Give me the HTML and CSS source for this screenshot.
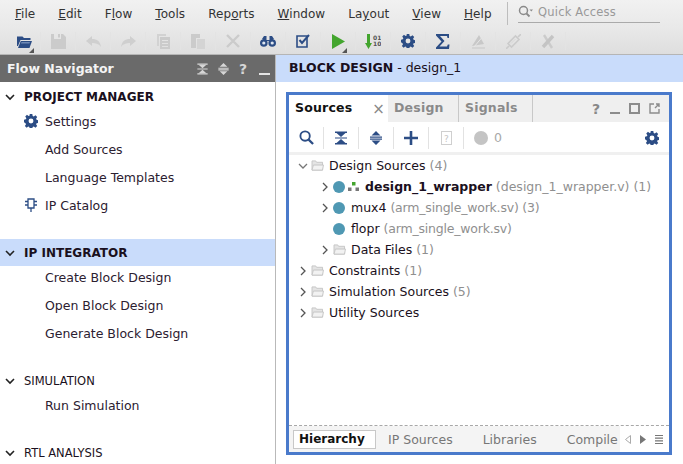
FILE: index.html
```html
<!DOCTYPE html>
<html lang="en">
<head>
    <meta charset="UTF-8">
    <meta name="viewport" content="width=device-width, initial-scale=1.0">
    <title>Vivado Block Design</title>
    <link rel="stylesheet" href="styles.css">
</head>
<body>
    <svg class="defs" width="0" height="0">
        <symbol id="gear" viewBox="0 0 16 16">
            <path fill-rule="evenodd" d="M6.5 0h3l.4 2.2 1.3.6 1.900-1.300 2 2-1.300 1.900.6 1.300 2.100.4v3l-2.100.4-.6 1.300 1.300 1.800-2 2-1.900-1.300-1.300.6-.4 2.100h-3l-.4-2.100-1.300-.6-1.800 1.300-2-2 1.300-1.800-.6-1.300L0 9.500v-3l2.100-.4.6-1.300-1.300-1.900 2-2 1.800 1.300 1.300-.6zM8 5.200a2.800 2.800 0 1 0 0 5.600 2.800 2.800 0 0 0 0-5.600z"/>
        </symbol>
        <symbol id="folder" viewBox="0 0 14 12">
            <path d="M1 1h4l1 1.500h6.500V11H1z" fill="#e4e4e4" stroke="#c4c4c4"/>
            <path d="M1 11l1.500-5.500H13.500L12.500 11z" fill="#f2f2f2" stroke="#c4c4c4"/>
        </symbol>
        <symbol id="collapse" viewBox="0 0 12 14">
            <path d="M0 .5h12v1.600H0zM0 11.900h12v1.600H0zM0 6.400h12v1.200H0z"/>
            <path d="M1.500 2.100h9L6 6zM1.500 11.900L6 8l4.500 3.900z"/>
        </symbol>
        <symbol id="expand" viewBox="0 0 12 14">
            <path d="M6 0l4.500 4.500h-9zM6 14L1.500 9.500h9zM0 5.400h12v1.300H0zM0 7.400h12v1.300H0z"/>
        </symbol>
    </svg>

    <header class="menubar">
        <nav class="menu">
            <span><u>F</u>ile</span>
            <span><u>E</u>dit</span>
            <span>F<u>l</u>ow</span>
            <span><u>T</u>ools</span>
            <span>Rep<u>o</u>rts</span>
            <span><u>W</u>indow</span>
            <span>La<u>y</u>out</span>
            <span><u>V</u>iew</span>
            <span><u>H</u>elp</span>
        </nav>
        <div class="quick-access">
            <svg width="15" height="13" viewBox="0 0 15 13"><circle cx="5.500" cy="5.500" r="4" fill="none" stroke="#8a8a8a" stroke-width="1.500"/><path d="M8.500 8.500l3 3" stroke="#8a8a8a" stroke-width="1.800"/><path d="M11.500 4.500h3.500l-1.700 2z" fill="#8a8a8a"/></svg>
            <span>Quick Access</span>
        </div>
    </header>

    <div class="toolbar">
        <div class="tool has-menu tool-open"><svg width="15" height="13" viewBox="0 0 15 13"><path d="M0 1.500h5.500l1.500 1.500h6.500v2H3.500L1 11H0z" fill="#2c4d85"/><path d="M1 13l2.800-7H15l-2.500 7z" fill="#2c4d85"/><path d="M4.500 7h8.500l-.6 1.500H3.900z" fill="#6f8ab5"/></svg></div>
        <div class="tool"><svg width="15" height="15" viewBox="0 0 15 15"><path fill-rule="evenodd" d="M0 0h3v5h7V0h2l3 3v12H0zM7 0h2v3.500H7z" fill="#cbcbcb"/></svg></div>
        <div class="tool"><svg width="15" height="11" viewBox="0 0 15 11"><path d="M6 0v3c5 0 8 2 9 8-2-3-5-4-9-4v3L0 5z" fill="#cfcfcf"/></svg></div>
        <div class="tool"><svg width="15" height="11" viewBox="0 0 15 11"><path d="M9 0v3C4 3 1 5 0 11c2-3 5-4 9-4v3l6-5z" fill="#cfcfcf"/></svg></div>
        <div class="tool"><svg width="13" height="15" viewBox="0 0 13 15"><path d="M0 0h9v2H2v10H0z" fill="#d2d2d2"/><path fill-rule="evenodd" d="M3 3h10v12H3zM5 6v1h6V6zM5 9v1h6V9zM5 12v1h6v-1z" fill="#cbcbcb"/></svg></div>
        <div class="tool"><svg width="14" height="15" viewBox="0 0 14 15"><path d="M0 0h9v4H5v10H0z" fill="#cbcbcb"/><path d="M6 5h8v10H6z" fill="#d4d4d4"/></svg></div>
        <div class="tool"><svg width="14" height="14" viewBox="0 0 14 14"><path d="M1 1l12 12M13 1L1 13" stroke="#cbcbcb" stroke-width="2.400"/></svg></div>
        <div class="tool"><svg width="16" height="11" viewBox="0 0 16 11"><circle cx="3.800" cy="7" r="3.800" fill="#2c4d85"/><circle cx="12.200" cy="7" r="3.800" fill="#2c4d85"/><path d="M2 3l2-3h2.500v4h3V0H12l2 3-3 2H5z" fill="#2c4d85"/><circle cx="3.800" cy="7" r="1.600" fill="#dfe6f0"/><circle cx="12.200" cy="7" r="1.600" fill="#dfe6f0"/></svg></div>
        <div class="tool"><svg width="15" height="14" viewBox="0 0 15 14"><path d="M1 2h10v11H1z" fill="none" stroke="#2c4d85" stroke-width="1.600"/><path d="M3.500 6l2.500 3 7-8" fill="none" stroke="#2c4d85" stroke-width="2"/></svg></div>
        <div class="tool has-menu tool-run"><svg width="13" height="15" viewBox="0 0 13 15"><path d="M0 0l13 7.500L0 15z" fill="#43a52e"/></svg></div>
        <div class="tool"><svg width="16" height="15" viewBox="0 0 16 15"><path d="M2 0h3v9h2l-3.500 6L0 9h2z" fill="#43a52e"/><text x="8" y="6" class="bits">01</text><text x="8" y="12" class="bits">10</text></svg></div>
        <div class="tool"><svg class="ico-blue" width="14" height="14"><use href="#gear"/></svg></div>
        <div class="tool"><svg width="14" height="15" viewBox="0 0 14 15"><path d="M0 0h13v4h-1.500L11 2H4l4.500 5L3.500 12.500H11l.8-2H13.500L13 15H0v-1.500L5.500 7.500 0 1.500z" fill="#2c4d85"/></svg></div>
        <div class="tool"><svg width="15" height="15" viewBox="0 0 15 15"><path d="M1 12L8 1l5 9z" fill="#c8c8c8"/><path d="M13 1L3 13" stroke="#e6e6e6" stroke-width="1"/><path d="M1 14h13" stroke="#d4d4d4" stroke-width="2"/></svg></div>
        <div class="tool"><svg width="15" height="15" viewBox="0 0 15 15"><path d="M2 9.500L9.500 2 13 5.500 5.500 13z" fill="none" stroke="#cbcbcb" stroke-width="1.600"/><path d="M0 15l3-3M12 3l3-3" stroke="#cbcbcb" stroke-width="1.600"/><path d="M5 9.500l4.500-4.500" stroke="#d8d8d8"/></svg></div>
        <div class="tool"><svg width="14" height="15" viewBox="0 0 14 15"><path d="M3 1l8 13" stroke="#cbcbcb" stroke-width="2.400"/><path d="M12 2L2 13" stroke="#c4c4c4" stroke-width="3.400"/></svg></div>
    </div>

    <main class="workspace">
        <aside class="flow-nav">
            <div class="nav-head">
                <span class="nav-title">Flow Navigator</span>
                <div class="nav-head-icons">
                    <svg width="11" height="12"><use href="#collapse"/></svg>
                    <svg width="11" height="12"><use href="#expand"/></svg>
                    <span class="head-help">?</span>
                    <span class="head-min"></span>
                </div>
            </div>

            <div class="nav-section first">
                <svg class="chev" width="10" height="10" viewBox="0 0 10 10"><path d="M1 3l4 4 4-4" fill="none" stroke="#222" stroke-width="1.600"/></svg>
                <b>PROJECT MANAGER</b>
            </div>
            <div class="nav-item nav-item-first"><svg class="item-icon ico-blue" width="14" height="14"><use href="#gear"/></svg>Settings</div>
            <div class="nav-item">Add Sources</div>
            <div class="nav-item">Language Templates</div>
            <div class="nav-item"><svg class="item-icon" width="14" height="14" viewBox="0 0 14 14"><path d="M4 1h6v9H4z" fill="none" stroke="#2c4d85" stroke-width="1.300"/><path d="M1 3.500h3M1 7h3M10 3.500h3M10 7h3M7 10v4" stroke="#2c4d85" stroke-width="1.300" fill="none"/></svg>IP Catalog</div>

            <div class="nav-section active">
                <svg class="chev" width="10" height="10" viewBox="0 0 10 10"><path d="M1 3l4 4 4-4" fill="none" stroke="#222" stroke-width="1.600"/></svg>
                <b>IP INTEGRATOR</b>
            </div>
            <div class="nav-item nav-item-first">Create Block Design</div>
            <div class="nav-item">Open Block Design</div>
            <div class="nav-item">Generate Block Design</div>

            <div class="nav-section plain">
                <svg class="chev" width="10" height="10" viewBox="0 0 10 10"><path d="M1 3l4 4 4-4" fill="none" stroke="#222" stroke-width="1.600"/></svg>
                SIMULATION
            </div>
            <div class="nav-item nav-item-first">Run Simulation</div>

            <div class="nav-section plain">
                <svg class="chev" width="10" height="10" viewBox="0 0 10 10"><path d="M1 3l4 4 4-4" fill="none" stroke="#222" stroke-width="1.600"/></svg>
                RTL ANALYSIS
            </div>
        </aside>

        <section class="design-area">
            <div class="design-head"><b>BLOCK DESIGN</b> - design_1</div>

            <div class="sources-panel">
                <div class="tabs">
                    <div class="tab current">Sources<span class="tab-close">×</span></div>
                    <div class="tab tab-design">Design</div>
                    <div class="tab tab-signals">Signals</div>
                    <div class="win-icons">
                        <span class="win-help">?</span>
                        <span class="win-min"></span>
                        <span class="win-max"></span>
                        <svg width="11" height="11" viewBox="0 0 11 11"><path d="M5 1H1v9h9V6M7 1h3v3M10 1L6 5" fill="none" stroke="#8c8c8c" stroke-width="1.400"/></svg>
                    </div>
                </div>

                <div class="panel-tools">
                    <div class="ptool"><svg width="15" height="15" viewBox="0 0 16 16"><circle cx="6.500" cy="6.500" r="5" fill="none" stroke="#2c4d85" stroke-width="2"/><path d="M10 10l5 5" stroke="#2c4d85" stroke-width="2.400"/></svg></div>
                    <div class="ptool"><svg class="ico-blue" width="12" height="14"><use href="#collapse"/></svg></div>
                    <div class="ptool"><svg class="ico-blue" width="12" height="14"><use href="#expand"/></svg></div>
                    <div class="ptool"><svg width="14" height="14" viewBox="0 0 14 14"><path d="M5.700 0h2.600v5.700H14v2.600H8.300V14H5.700V8.300H0V5.700h5.700z" fill="#2c4d85"/></svg></div>
                    <div class="ptool"><svg width="11" height="14" viewBox="0 0 11 14"><rect x=".5" y=".5" width="10" height="13" fill="none" stroke="#cfcfcf"/><text x="5.500" y="10.500" class="doc-mark">?</text></svg></div>
                    <div class="ptool count"><span class="grey-dot"></span><span class="count-num">0</span></div>
                    <svg class="ptool-gear ico-blue" width="14" height="14"><use href="#gear"/></svg>
                </div>

                <div class="tree">
                    <div class="row lvl0"><svg class="twist" width="10" height="10" viewBox="0 0 10 10"><path d="M1 3l4 4 4-4" fill="none" stroke="#777" stroke-width="1.300"/></svg><svg class="fold" width="13" height="11"><use href="#folder"/></svg>Design Sources <span class="dim">(4)</span></div>
                    <div class="row lvl1"><svg class="twist" width="10" height="10" viewBox="0 0 10 10"><path d="M3 1l4 4-4 4" fill="none" stroke="#555" stroke-width="1.300"/></svg><span class="dot"></span><svg class="bd-icon" width="11" height="9" viewBox="0 0 11 9"><path d="M4 0h3.500v3.500H4z" fill="#43a52e"/><path d="M0 5.500h3.500V9H0zM7.500 5.500H11V9H7.500z" fill="#777"/></svg><b>design_1_wrapper</b><span class="dim"> (design_1_wrapper.v) (1)</span></div>
                    <div class="row lvl1"><svg class="twist" width="10" height="10" viewBox="0 0 10 10"><path d="M3 1l4 4-4 4" fill="none" stroke="#555" stroke-width="1.300"/></svg><span class="dot"></span>mux4 <span class="dim tight">(arm_single_work.sv) (3)</span></div>
                    <div class="row lvl1 no-twist"><span class="dot"></span>flopr <span class="dim tight">(arm_single_work.sv)</span></div>
                    <div class="row lvl1"><svg class="twist" width="10" height="10" viewBox="0 0 10 10"><path d="M3 1l4 4-4 4" fill="none" stroke="#555" stroke-width="1.300"/></svg><svg class="fold" width="13" height="11"><use href="#folder"/></svg>Data Files <span class="dim">(1)</span></div>
                    <div class="row lvl0"><svg class="twist" width="10" height="10" viewBox="0 0 10 10"><path d="M3 1l4 4-4 4" fill="none" stroke="#555" stroke-width="1.300"/></svg><svg class="fold" width="13" height="11"><use href="#folder"/></svg>Constraints <span class="dim">(1)</span></div>
                    <div class="row lvl0"><svg class="twist" width="10" height="10" viewBox="0 0 10 10"><path d="M3 1l4 4-4 4" fill="none" stroke="#555" stroke-width="1.300"/></svg><svg class="fold" width="13" height="11"><use href="#folder"/></svg>Simulation Sources <span class="dim">(5)</span></div>
                    <div class="row lvl0"><svg class="twist" width="10" height="10" viewBox="0 0 10 10"><path d="M3 1l4 4-4 4" fill="none" stroke="#555" stroke-width="1.300"/></svg><svg class="fold" width="13" height="11"><use href="#folder"/></svg>Utility Sources</div>
                </div>

                <div class="bottom-tabs">
                    <div class="btab-strip">
                        <div class="btab selected">Hierarchy</div>
                        <div class="btab">IP Sources</div>
                        <div class="btab">Libraries</div>
                        <div class="btab">Compile</div>
                    </div>
                    <div class="btab-nav">
                        <svg width="6" height="9" viewBox="0 0 6 9"><path d="M5.500.5v8L.5 4.500z" fill="none" stroke="#aaa"/></svg>
                        <svg width="6" height="9" viewBox="0 0 6 9"><path d="M0 0v9l6-4.500z" fill="#777"/></svg>
                        <svg width="8" height="9" viewBox="0 0 8 9"><path d="M0 .5h8M0 3.200h8M0 5.800h8M0 8.500h8" stroke="#777" stroke-width="1.200"/></svg>
                    </div>
                </div>
            </div>
        </section>
    </main>
</body>
</html>
```

FILE: styles.css
```css
html, body {
    margin: 0;
    padding: 0;
}
body {
    width: 683px;
    height: 464px;
    overflow: hidden;
    display: flex;
    flex-direction: column;
    font-family: 'DejaVu Sans', sans-serif;
    font-size: 12.5px;
    color: #1a1020;
    background: #fff;
}
.defs {
    position: absolute;
}
.ico-blue {
    fill: #2c4d85;
}

/* menu + toolbar */
.menubar {
    height: 27px;
    display: flex;
    background: linear-gradient(#f1f1f1, #e9e9e9);
}
.menu {
    display: flex;
    gap: 23px;
    width: 508px;
    box-sizing: border-box;
    border-right: 1px solid #bdbdbd;
    margin: 2px 0;
    padding: 5px 0 0 15px;
    color: #333;
    font-size: 12px;
    letter-spacing: .05px;
    white-space: nowrap;
}
.menu span {
    line-height: 14px;
}
.quick-access {
    margin: 0 0 0 10px;
    width: 142px;
    height: 23px;
    padding-top: 5px;
    box-sizing: border-box;
    border-bottom: 1px solid #aaa;
    display: flex;
    gap: 5px;
    color: #999;
    font-size: 11.5px;
    letter-spacing: .2px;
}
.toolbar {
    height: 28px;
    flex: none;
    display: flex;
    padding: 5px 0 0 6px;
    box-sizing: border-box;
    background: linear-gradient(#e9e9e9, #dedede);
    border-bottom: 1px solid #b5b5b5;
}
.tool {
    width: 35px;
    height: 18px;
    display: flex;
    align-items: center;
    justify-content: center;
    border-right: 1px solid #e3e3e3;
    box-sizing: border-box;
    position: relative;
}
.tool-open svg {
    margin-left: 3px;
}
.has-menu::after {
    content: "";
    position: absolute;
    right: 6px;
    bottom: -3px;
    border-left: 5px solid transparent;
    border-bottom: 5px solid #555;
}
.tool-run::after {
    right: 8px;
}
.bits {
    font-size: 6px;
    fill: #555;
    font-weight: bold;
}

.workspace {
    flex: 1;
    min-height: 0;
    display: flex;
}

/* left column */
.flow-nav {
    width: 276px;
    flex: none;
    box-sizing: border-box;
    border-right: 1px solid #b9b9b9;
    overflow: hidden;
}
.nav-head {
    height: 27px;
    background: #6a6a6a;
    display: flex;
    align-items: center;
    justify-content: space-between;
    padding: 0 5px 0 7px;
}
.nav-title {
    color: #f4f4f4;
    font-weight: bold;
    font-size: 12.5px;
}
.nav-head-icons {
    display: flex;
    align-items: center;
    gap: 10px;
    fill: #d6d6d6;
}
.head-help {
    color: #d6d6d6;
    font-weight: bold;
    font-size: 14px;
    width: 10px;
}
.head-min {
    width: 11px;
    height: 2px;
    margin: 10px 0 0 0;
    background: #e4e4e4;
}
.nav-section {
    height: 27px;
    display: flex;
    align-items: center;
    gap: 9px;
    padding-left: 5px;
    margin-top: 20px;
    font-size: 12px;
}
.nav-section.first {
    margin-top: 1px;
}
.nav-section.active {
    background: #c9dcfb;
}
.nav-section.plain {
    font-size: 11.5px;
}
.nav-item {
    height: 28px;
    display: flex;
    align-items: center;
    padding-left: 45px;
    position: relative;
    color: #2b2030;
}
.nav-item-first {
    margin-top: -3px;
}
.item-icon {
    position: absolute;
    left: 24px;
    top: 7px;
}

/* right column */
.design-area {
    flex: 1;
    min-width: 0;
    display: flex;
    flex-direction: column;
}
.design-head {
    height: 27px;
    line-height: 26px;
    padding-left: 13px;
    background: #c9dcfb;
}
.sources-panel {
    width: 386px;
    height: 363px;
    margin: 10px 0 0 10px;
    box-sizing: border-box;
    border: 3px solid #4a7acb;
    display: flex;
    flex-direction: column;
}
.tabs {
    height: 27px;
    flex: none;
    display: flex;
    background: #efefef;
    font-weight: bold;
    color: #8a8a8a;
    letter-spacing: .2px;
}
.tab {
    padding-left: 6px;
    line-height: 25px;
    border-right: 1px solid #c8c8c8;
    box-sizing: border-box;
    white-space: nowrap;
}
.tab-design {
    width: 71px;
}
.tab-signals {
    width: 74px;
}
.tab.current {
    background: #fff;
    color: #111;
    width: 99px;
    border-right: 0;
    position: relative;
}
.tab-close {
    position: absolute;
    right: 3px;
    top: 2px;
    color: #888;
    font-weight: normal;
    font-size: 15px;
}
.win-icons {
    margin-left: auto;
    display: flex;
    align-items: center;
    gap: 9px;
    padding-right: 9px;
}
.win-help {
    font-size: 14px;
    color: #888;
    width: 9px;
}
.win-min {
    width: 10px;
    height: 2px;
    margin-top: 8px;
    background: #8c8c8c;
}
.win-max {
    width: 7px;
    height: 7px;
    border: 2px solid #8c8c8c;
}
.panel-tools {
    height: 33px;
    flex: none;
    display: flex;
    align-items: center;
    padding-top: 1px;
    border-bottom: 3px solid #f0f0f0;
    box-sizing: border-box;
}
.ptool {
    width: 35px;
    height: 22px;
    display: flex;
    align-items: center;
    justify-content: center;
    border-right: 1px solid #e2e2e2;
    box-sizing: border-box;
}
.ptool.count {
    border-right: 0;
    justify-content: flex-start;
    padding-left: 10px;
    gap: 6px;
    width: 60px;
}
.grey-dot {
    width: 14px;
    height: 14px;
    border-radius: 50%;
    background: #c4c4c4;
}
.count-num {
    color: #a8a8a8;
}
.doc-mark {
    font-size: 9px;
    fill: #c4c4c4;
    text-anchor: middle;
}
.ptool-gear {
    margin-left: auto;
    margin-right: 10px;
}
.tree {
    flex: 1;
    min-height: 0;
}
.row {
    height: 21px;
    display: flex;
    align-items: center;
    white-space: pre;
}
.lvl0 {
    padding-left: 9px;
}
.lvl1 {
    padding-left: 31px;
}
.lvl1.no-twist {
    padding-left: 44px;
}
.twist {
    margin-right: 3px;
}
.fold {
    margin-right: 5px;
}
.dot {
    width: 12px;
    height: 12px;
    border-radius: 50%;
    background: #4f98b3;
    margin-right: 6px;
}
.bd-icon {
    margin: 0 6px 0 -3px;
}
.dim {
    color: #8f8f8f;
}
.tight {
    letter-spacing: -.2px;
}
.bottom-tabs {
    height: 27px;
    flex: none;
    display: flex;
    border-top: 1px dashed #a8a8a8;
    box-sizing: border-box;
    color: #777;
}
.btab-strip {
    width: 331px;
    flex: none;
    display: flex;
    align-items: center;
    gap: 30px;
    padding-left: 4px;
    box-sizing: border-box;
    overflow: hidden;
    background: #f4f4f4;
}
.btab {
    white-space: nowrap;
}
.btab.selected {
    width: 83px;
    height: 19px;
    box-sizing: border-box;
    margin-right: -18px;
    padding-left: 5px;
    background: #fff;
    border: 1px solid #c8c8c8;
    color: #111;
    font-weight: bold;
    font-size: 12px;
    line-height: 17px;
}
.btab-nav {
    display: flex;
    align-items: center;
    gap: 9px;
    margin-left: 5px;
}
```
